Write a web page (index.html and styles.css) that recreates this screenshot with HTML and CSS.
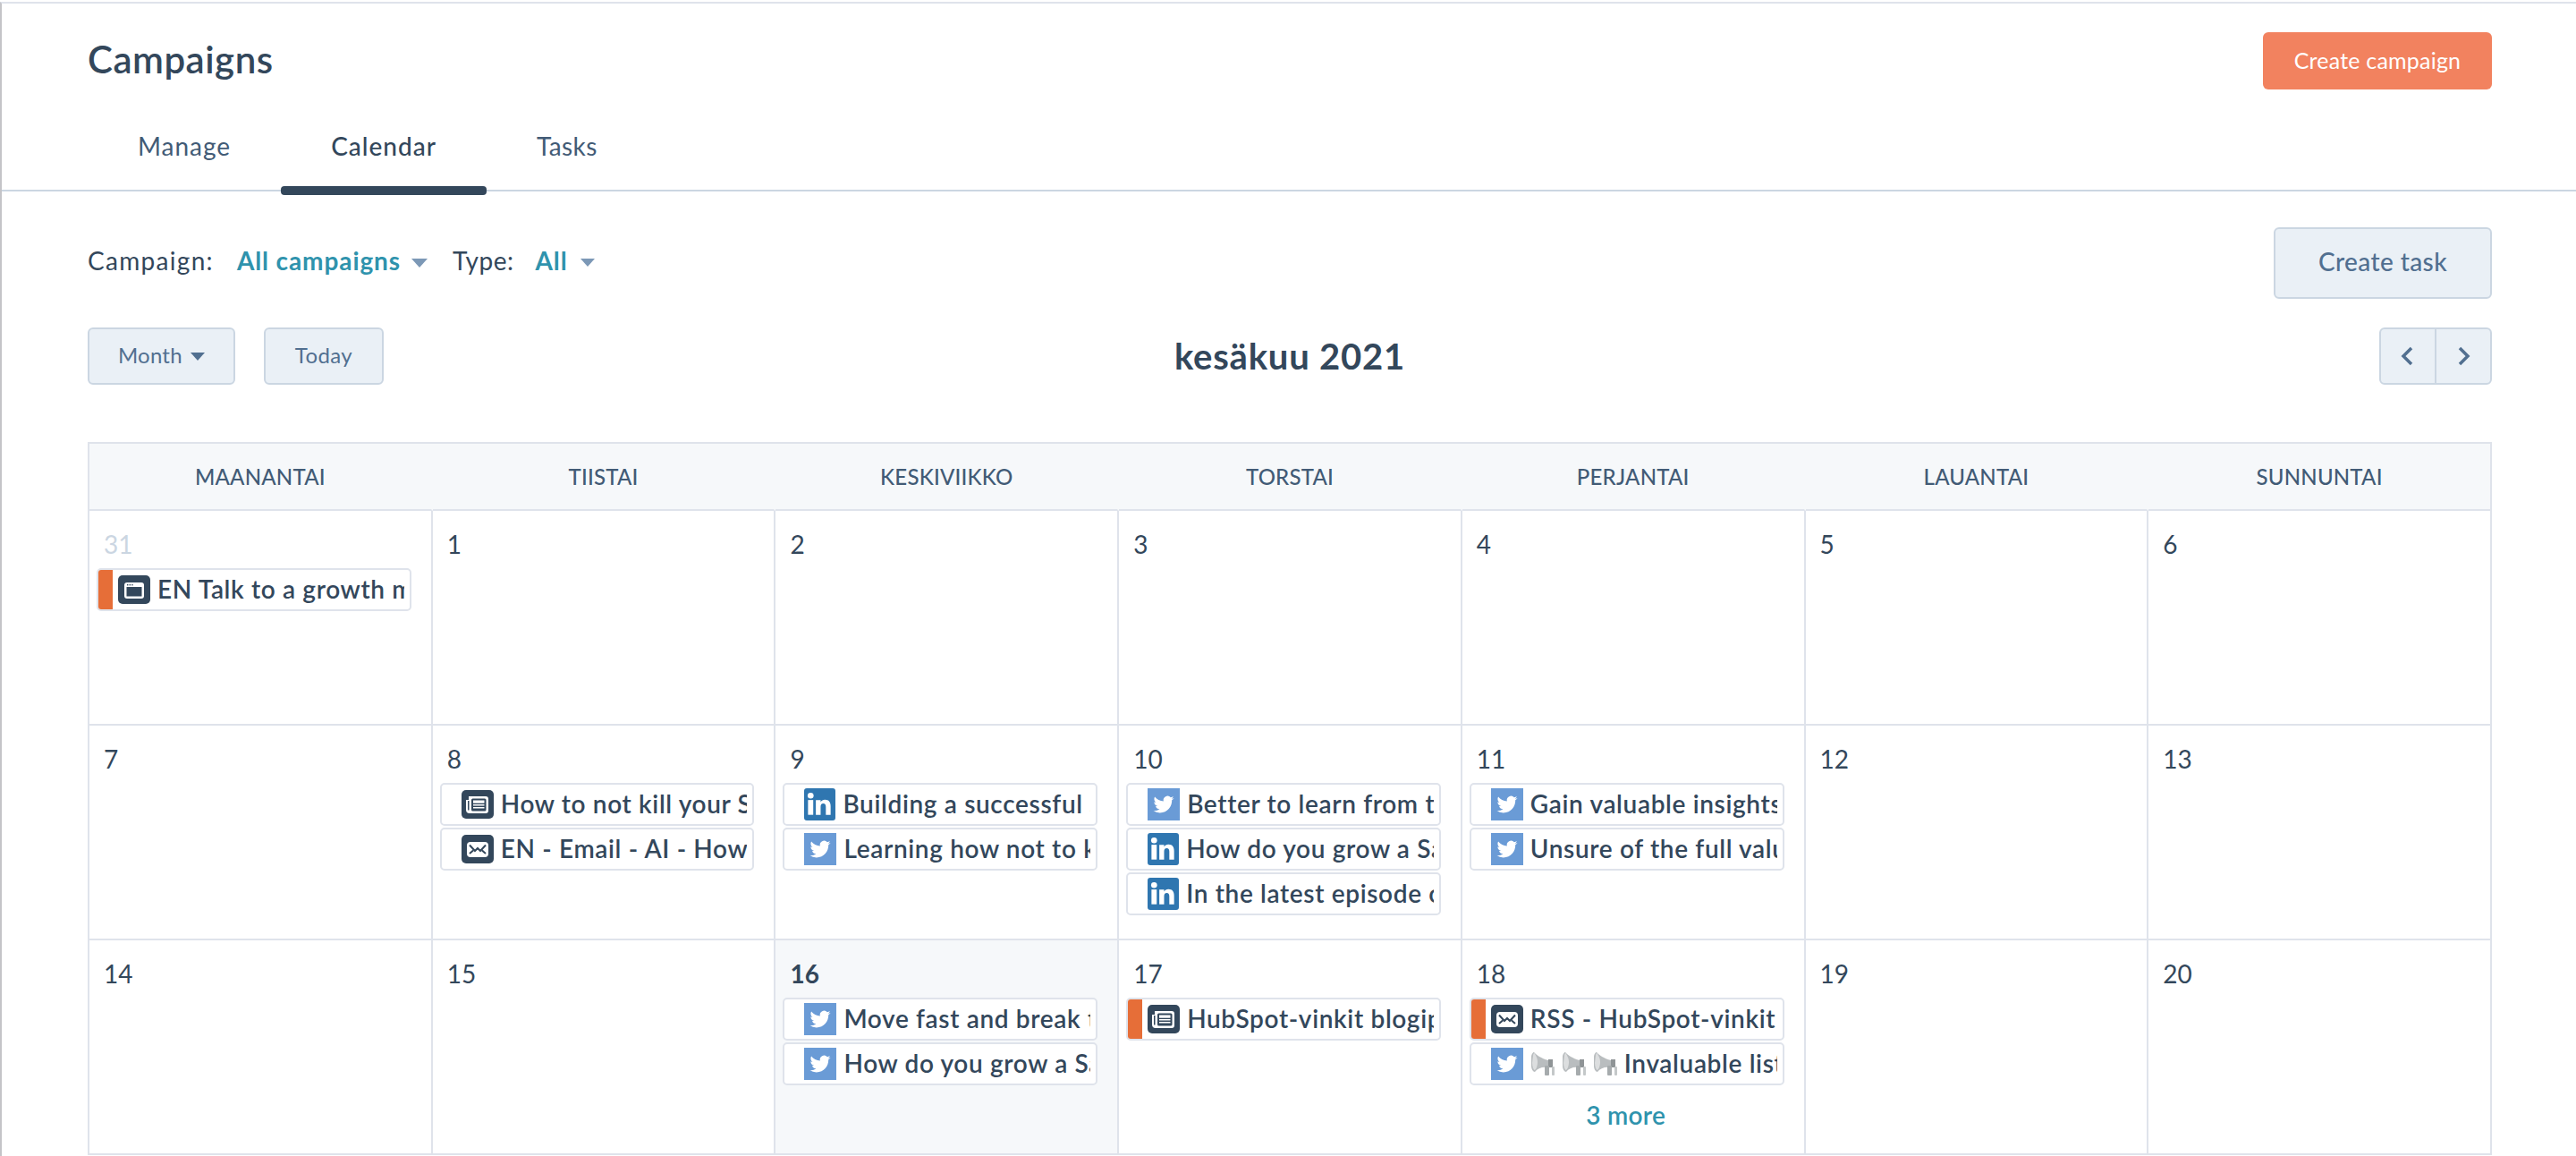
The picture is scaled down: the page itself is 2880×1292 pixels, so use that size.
FILE: index.html
```html
<!DOCTYPE html>
<html lang="en">
<head>
  <meta charset="UTF-8">
  <title>Campaigns</title>
  <link rel="stylesheet" href="styles.css">
</head>
<body>

<svg class="defs" width="0" height="0">
  <symbol id="tw" viewBox="0 0 36 36">
    <g transform="translate(6.5 6.5) scale(0.96)"><path fill="#fff" d="M23.95 4.57a10 10 0 0 1-2.82.77 4.96 4.96 0 0 0 2.16-2.72c-.95.55-2 .95-3.12 1.18a4.92 4.92 0 0 0-8.38 4.48C7.69 8.1 4.07 6.13 1.64 3.16a4.82 4.82 0 0 0-.67 2.48c0 1.71.87 3.21 2.19 4.1a4.9 4.9 0 0 1-2.23-.62v.06a4.92 4.92 0 0 0 3.95 4.83 5 5 0 0 1-2.21.08 4.94 4.94 0 0 0 4.6 3.42A9.87 9.87 0 0 1 0 19.54a14 14 0 0 0 7.56 2.21c9.05 0 14-7.5 14-13.98 0-.21 0-.42-.02-.63a9.94 9.94 0 0 0 2.46-2.55z"/></g>
  </symbol>
  <symbol id="li" viewBox="0 0 36 36">
    <circle cx="7.5" cy="8" r="3.400" fill="#fff"/>
    <rect x="4.500" y="13" width="6" height="17" fill="#fff"/>
    <path fill="#fff" d="M13.500 13h5.500v2.400c1-1.700 2.800-2.800 5-2.800 4.500 0 6.500 2.800 6.500 7.400V30h-5.500v-9.200c0-2.500-.9-3.900-3-3.900-2.200 0-3 1.500-3 4V30h-5.500z"/>
  </symbol>
  <symbol id="page" viewBox="0 0 36 32">
    <rect x="7" y="8" width="22" height="18" rx="3" fill="#fff"/>
    <rect x="9.500" y="13" width="17" height="10.500" fill="#33475b"/>
    <rect x="10" y="10" width="1.400" height="1.400" fill="#33475b"/>
    <rect x="12.600" y="10" width="1.400" height="1.400" fill="#33475b"/>
    <rect x="15.200" y="10" width="1.400" height="1.400" fill="#33475b"/>
  </symbol>
  <symbol id="blog" viewBox="0 0 36 32">
    <path fill="#fff" d="M8 7h19a3 3 0 0 1 3 3v13a3 3 0 0 1-3 3H9a4 4 0 0 1-4-4V11h3z"/>
    <path fill="#33475b" d="M7 12h1.500v10.500H7z"/>
    <rect x="11" y="9.500" width="16.500" height="14" rx="1.500" fill="#33475b"/>
    <rect x="13" y="11.500" width="12.500" height="3.200" fill="#fff"/>
    <rect x="13" y="16" width="12.500" height="1.500" fill="#fff"/>
    <rect x="13" y="19" width="12.500" height="1.500" fill="#fff"/>
  </symbol>
  <symbol id="mail" viewBox="0 0 36 32">
    <rect x="6" y="8" width="24" height="17" rx="4" fill="#fff"/>
    <path fill="none" stroke="#33475b" stroke-width="2" d="M9 11.500l6 6.500 3-3 3 3 6-6.500M9 21l4-3.500M27 21l-4-3.500"/>
  </symbol>
  <symbol id="horn" viewBox="0 0 28 28">
    <path fill="#b9bdbf" d="M1 6c0-3 2-5 3-5 3 3 8 7 16 9v8C13 17 8 19 5 23c-2 0-4-3-4-7z"/>
    <path fill="#dcdedf" d="M3 5c0-2 1-3 1.500-3C5.500 4 8 7 8 12s-2 9-3.500 9C3.500 20 2 17 2 13z"/>
    <rect x="20" y="9" width="5" height="9" fill="#8f9496"/>
    <rect x="16" y="16" width="5" height="11" rx="1" fill="#a6abad"/>
    <rect x="24" y="17" width="3" height="10" rx="1" fill="#c4c8c9"/>
  </symbol>
</svg>

<div class="page">
  <header class="page-head">
    <div class="title-row">
      <h1 class="page-title">Campaigns</h1>
      <button class="btn btn-primary">Create campaign</button>
    </div>
    <nav class="tabs">
      <a class="tab">Manage</a>
      <a class="tab active">Calendar</a>
      <a class="tab">Tasks</a>
    </nav>
  </header>

  <div class="filter-row">
    <div class="filters">
      <span class="filter-label">Campaign:</span>
      <a class="filter-value">All campaigns<i class="caret"></i></a>
      <span class="filter-label type-label">Type:</span>
      <a class="filter-value">All<i class="caret small"></i></a>
    </div>
    <button class="btn btn-task">Create task</button>
  </div>

  <div class="cal-toolbar">
    <div class="view-btns">
      <button class="btn btn-small">Month<i class="caret dark"></i></button>
      <button class="btn btn-small">Today</button>
    </div>
    <h2 class="cal-title">kesäkuu 2021</h2>
    <div class="pager">
      <button class="pager-btn"><svg width="18" height="24" viewBox="0 0 18 24"><path d="M13 3L4 12l9 9" fill="none" stroke="#516f90" stroke-width="3.500"/></svg></button>
      <button class="pager-btn"><svg width="18" height="24" viewBox="0 0 18 24"><path d="M5 3l9 9-9 9" fill="none" stroke="#516f90" stroke-width="3.500"/></svg></button>
    </div>
  </div>

  <div class="calendar">
    <div class="day-name">Maanantai</div>
    <div class="day-name">Tiistai</div>
    <div class="day-name">Keskiviikko</div>
    <div class="day-name">Torstai</div>
    <div class="day-name">Perjantai</div>
    <div class="day-name">Lauantai</div>
    <div class="day-name">Sunnuntai</div>

    <div class="cell">
      <div class="num muted">31</div>
      <div class="chip flagged"><span class="ico tile"><svg><use href="#page"/></svg></span><span class="chip-text">EN Talk to a growth marketer</span></div>
    </div>
    <div class="cell"><div class="num">1</div></div>
    <div class="cell"><div class="num">2</div></div>
    <div class="cell"><div class="num">3</div></div>
    <div class="cell"><div class="num">4</div></div>
    <div class="cell"><div class="num">5</div></div>
    <div class="cell"><div class="num">6</div></div>

    <div class="cell"><div class="num">7</div></div>
    <div class="cell">
      <div class="num">8</div>
      <div class="chip"><span class="ico tile"><svg><use href="#blog"/></svg></span><span class="chip-text">How to not kill your SaaS</span></div>
      <div class="chip"><span class="ico tile"><svg><use href="#mail"/></svg></span><span class="chip-text">EN - Email - AI - How to</span></div>
    </div>
    <div class="cell">
      <div class="num">9</div>
      <div class="chip"><span class="ico linkedin"><svg><use href="#li"/></svg></span><span class="chip-text">Building a successful SaaS</span></div>
      <div class="chip"><span class="ico twitter"><svg><use href="#tw"/></svg></span><span class="chip-text">Learning how not to kill</span></div>
    </div>
    <div class="cell">
      <div class="num">10</div>
      <div class="chip"><span class="ico twitter"><svg><use href="#tw"/></svg></span><span class="chip-text">Better to learn from the</span></div>
      <div class="chip"><span class="ico linkedin"><svg><use href="#li"/></svg></span><span class="chip-text">How do you grow a SaaS</span></div>
      <div class="chip"><span class="ico linkedin"><svg><use href="#li"/></svg></span><span class="chip-text">In the latest episode of</span></div>
    </div>
    <div class="cell">
      <div class="num">11</div>
      <div class="chip"><span class="ico twitter"><svg><use href="#tw"/></svg></span><span class="chip-text">Gain valuable insights</span></div>
      <div class="chip"><span class="ico twitter"><svg><use href="#tw"/></svg></span><span class="chip-text">Unsure of the full value</span></div>
    </div>
    <div class="cell"><div class="num">12</div></div>
    <div class="cell"><div class="num">13</div></div>

    <div class="cell"><div class="num">14</div></div>
    <div class="cell"><div class="num">15</div></div>
    <div class="cell today">
      <div class="num">16</div>
      <div class="chip"><span class="ico twitter"><svg><use href="#tw"/></svg></span><span class="chip-text">Move fast and break things</span></div>
      <div class="chip"><span class="ico twitter"><svg><use href="#tw"/></svg></span><span class="chip-text">How do you grow a SaaS</span></div>
    </div>
    <div class="cell">
      <div class="num">17</div>
      <div class="chip flagged"><span class="ico tile"><svg><use href="#blog"/></svg></span><span class="chip-text">HubSpot-vinkit blogipostaus</span></div>
    </div>
    <div class="cell">
      <div class="num">18</div>
      <div class="chip flagged"><span class="ico tile"><svg><use href="#mail"/></svg></span><span class="chip-text">RSS - HubSpot-vinkit</span></div>
      <div class="chip"><span class="ico twitter"><svg><use href="#tw"/></svg></span><span class="chip-text"><svg class="horn"><use href="#horn"/></svg><svg class="horn"><use href="#horn"/></svg><svg class="horn"><use href="#horn"/></svg>Invaluable listening</span></div>
      <a class="more">3 more</a>
    </div>
    <div class="cell"><div class="num">19</div></div>
    <div class="cell"><div class="num">20</div></div>
  </div>
</div>

</body>
</html>
```

FILE: styles.css
```css
html, body {
  margin: 0;
  height: 1292px;
  overflow: hidden;
  background: white;
}

body {
  font-family: "Lato", "Open Sans", sans-serif;
  color: #33475b;
  padding-top: 2px;
  box-sizing: border-box;
}

.defs {
  display: block;
  height: 0;
}

.page {
  border-top: 2px solid #dfe3eb;
  border-left: 2px solid #c4c4c8;
  height: 1288px;
}

/* header + tabs */
.page-head {
  border-bottom: 2px solid #cbd6e2;
  padding: 32px 94px 0 96px;
}

.title-row {
  display: flex;
  justify-content: space-between;
  align-items: center;
}

.page-title {
  margin: 0 0 5px;
  font-size: 42px;
  font-weight: 600;
  letter-spacing: 0.5px;
}

.btn {
  font-family: inherit;
  border-radius: 6px;
  border: 2px solid #cbd6e2;
  background: #eaf0f6;
  color: #516f90;
  box-sizing: border-box;
}

.btn-primary {
  width: 256px;
  height: 64px;
  padding-bottom: 3px;
  background: #f2825f;
  border: none;
  color: white;
  font-size: 25px;
  letter-spacing: 0.2px;
}

.tabs {
  display: flex;
  margin-top: 45px;
}

.tab {
  position: relative;
  padding: 0 56px 31px;
  font-size: 28px;
  line-height: 36px;
  letter-spacing: 1px;
  color: #425b76;
}

.tab:last-child {
  letter-spacing: 0.4px;
}

.tab.active {
  color: #33475b;
  font-weight: 500;
}

.tab.active::after {
  content: "";
  position: absolute;
  left: 0;
  right: 0;
  bottom: -6px;
  height: 10px;
  border-radius: 4px;
  background: #33475b;
}

/* filters */
.filter-row {
  display: flex;
  justify-content: space-between;
  align-items: center;
  margin: 40px 94px 0 96px;
}

.filters {
  display: flex;
  align-items: center;
  padding-bottom: 6px;
  font-size: 28px;
}

.filter-label {
  letter-spacing: 1.3px;
  margin-right: 26px;
}

.type-label {
  margin-left: 28px;
  margin-right: 24px;
  letter-spacing: 0.5px;
}

.filter-value {
  display: flex;
  align-items: center;
  color: #2f93ad;
  font-weight: 700;
  letter-spacing: 0.9px;
}

.caret {
  display: inline-block;
  width: 0;
  height: 0;
  margin-left: 12px;
  margin-top: 5px;
  border-left: 9px solid transparent;
  border-right: 9px solid transparent;
  border-top: 10px solid #7c98b6;
}

.caret.small {
  margin-left: 14px;
  border-left-width: 8px;
  border-right-width: 8px;
  border-top-width: 9px;
}

.caret.dark {
  margin-left: 9px;
  margin-top: 0;
  vertical-align: 3px;
  border-left-width: 8px;
  border-right-width: 8px;
  border-top-width: 9px;
  border-top-color: #516f90;
}

.btn-task {
  width: 244px;
  height: 80px;
  padding-bottom: 5px;
  font-size: 28px;
  font-weight: 500;
  letter-spacing: 0.4px;
}

/* month toolbar */
.cal-toolbar {
  display: grid;
  grid-template-columns: 1fr auto 1fr;
  align-items: center;
  margin: 32px 94px 0 96px;
}

.view-btns {
  display: flex;
  gap: 32px;
}

.btn-small {
  height: 64px;
  padding: 0 32px 3px;
  font-size: 24px;
  letter-spacing: 0.2px;
}

.btn-small:last-child {
  padding: 0 33px 3px;
  letter-spacing: 0.4px;
}

.cal-title {
  margin: 0;
  font-size: 40px;
  font-weight: 700;
  letter-spacing: 0.8px;
}

.pager {
  justify-self: end;
  display: flex;
  width: 126px;
  height: 64px;
  box-sizing: border-box;
  border: 2px solid #cbd6e2;
  border-radius: 6px;
  background: #eaf0f6;
}

.pager-btn {
  flex: 1;
  padding: 0;
  border: none;
  background: none;
  display: flex;
  align-items: center;
  justify-content: center;
}

.pager-btn + .pager-btn {
  border-left: 2px solid #cbd6e2;
}

/* calendar grid */
.calendar {
  display: grid;
  grid-template-columns: repeat(7, 1fr);
  grid-template-rows: 75px 240px 240px 240px;
  margin: 64px 94px 0 96px;
  border-top: 2px solid #dfe3eb;
  border-left: 2px solid #dfe3eb;
}

.day-name {
  display: flex;
  align-items: center;
  justify-content: center;
  background: #f6f8fa;
  border-right: 2px solid #dfe3eb;
  border-bottom: 2px solid #dfe3eb;
  font-size: 24px;
  font-weight: 500;
  color: #425b76;
  text-transform: uppercase;
  letter-spacing: 0.2px;
}

.day-name:nth-child(-n+6) {
  border-right-color: transparent;
}

.cell {
  display: flex;
  flex-direction: column;
  gap: 2px;
  min-width: 0;
  padding: 19px 22px 0 8px;
  border-right: 2px solid #dfe3eb;
  border-bottom: 2px solid #dfe3eb;
  box-sizing: border-box;
}

.cell.today {
  background: #f6f8fa;
}

.num {
  margin: 0 0 7px 8px;
  font-size: 28px;
  line-height: 36px;
  color: #33475b;
}

.num.muted {
  color: #cbd6e2;
}

.today .num {
  font-weight: 700;
}

.chip {
  position: relative;
  flex: none;
  display: flex;
  align-items: center;
  height: 48px;
  box-sizing: border-box;
  padding: 0 6px 0 22px;
  background: white;
  border: 2px solid #dfe3eb;
  border-radius: 5px;
  overflow: hidden;
}

.chip.flagged::before {
  content: "";
  position: absolute;
  left: 0;
  top: 0;
  bottom: 0;
  width: 16px;
  background: #e66e38;
}

.ico {
  flex: none;
  width: 36px;
  height: 36px;
}

.ico svg {
  display: block;
  width: 100%;
  height: 100%;
}

.ico.tile {
  height: 32px;
  background: #33475b;
  border-radius: 5px;
}

.ico.twitter {
  background: #6a9bd6;
}

.ico.linkedin {
  width: 35px;
  background: #2f76b0;
  border-radius: 3px;
}

.chip-text {
  margin-left: 8px;
  padding-bottom: 2px;
  min-width: 0;
  font-size: 28px;
  font-weight: 600;
  letter-spacing: 0.65px;
  white-space: nowrap;
  overflow: hidden;
}

.horn {
  width: 28px;
  height: 28px;
  margin-right: 7px;
  vertical-align: -4px;
}

.more {
  margin-top: 14px;
  margin-right: 2px;
  text-align: center;
  font-size: 28px;
  font-weight: 600;
  letter-spacing: 0.3px;
  color: #2f93ad;
}
```
